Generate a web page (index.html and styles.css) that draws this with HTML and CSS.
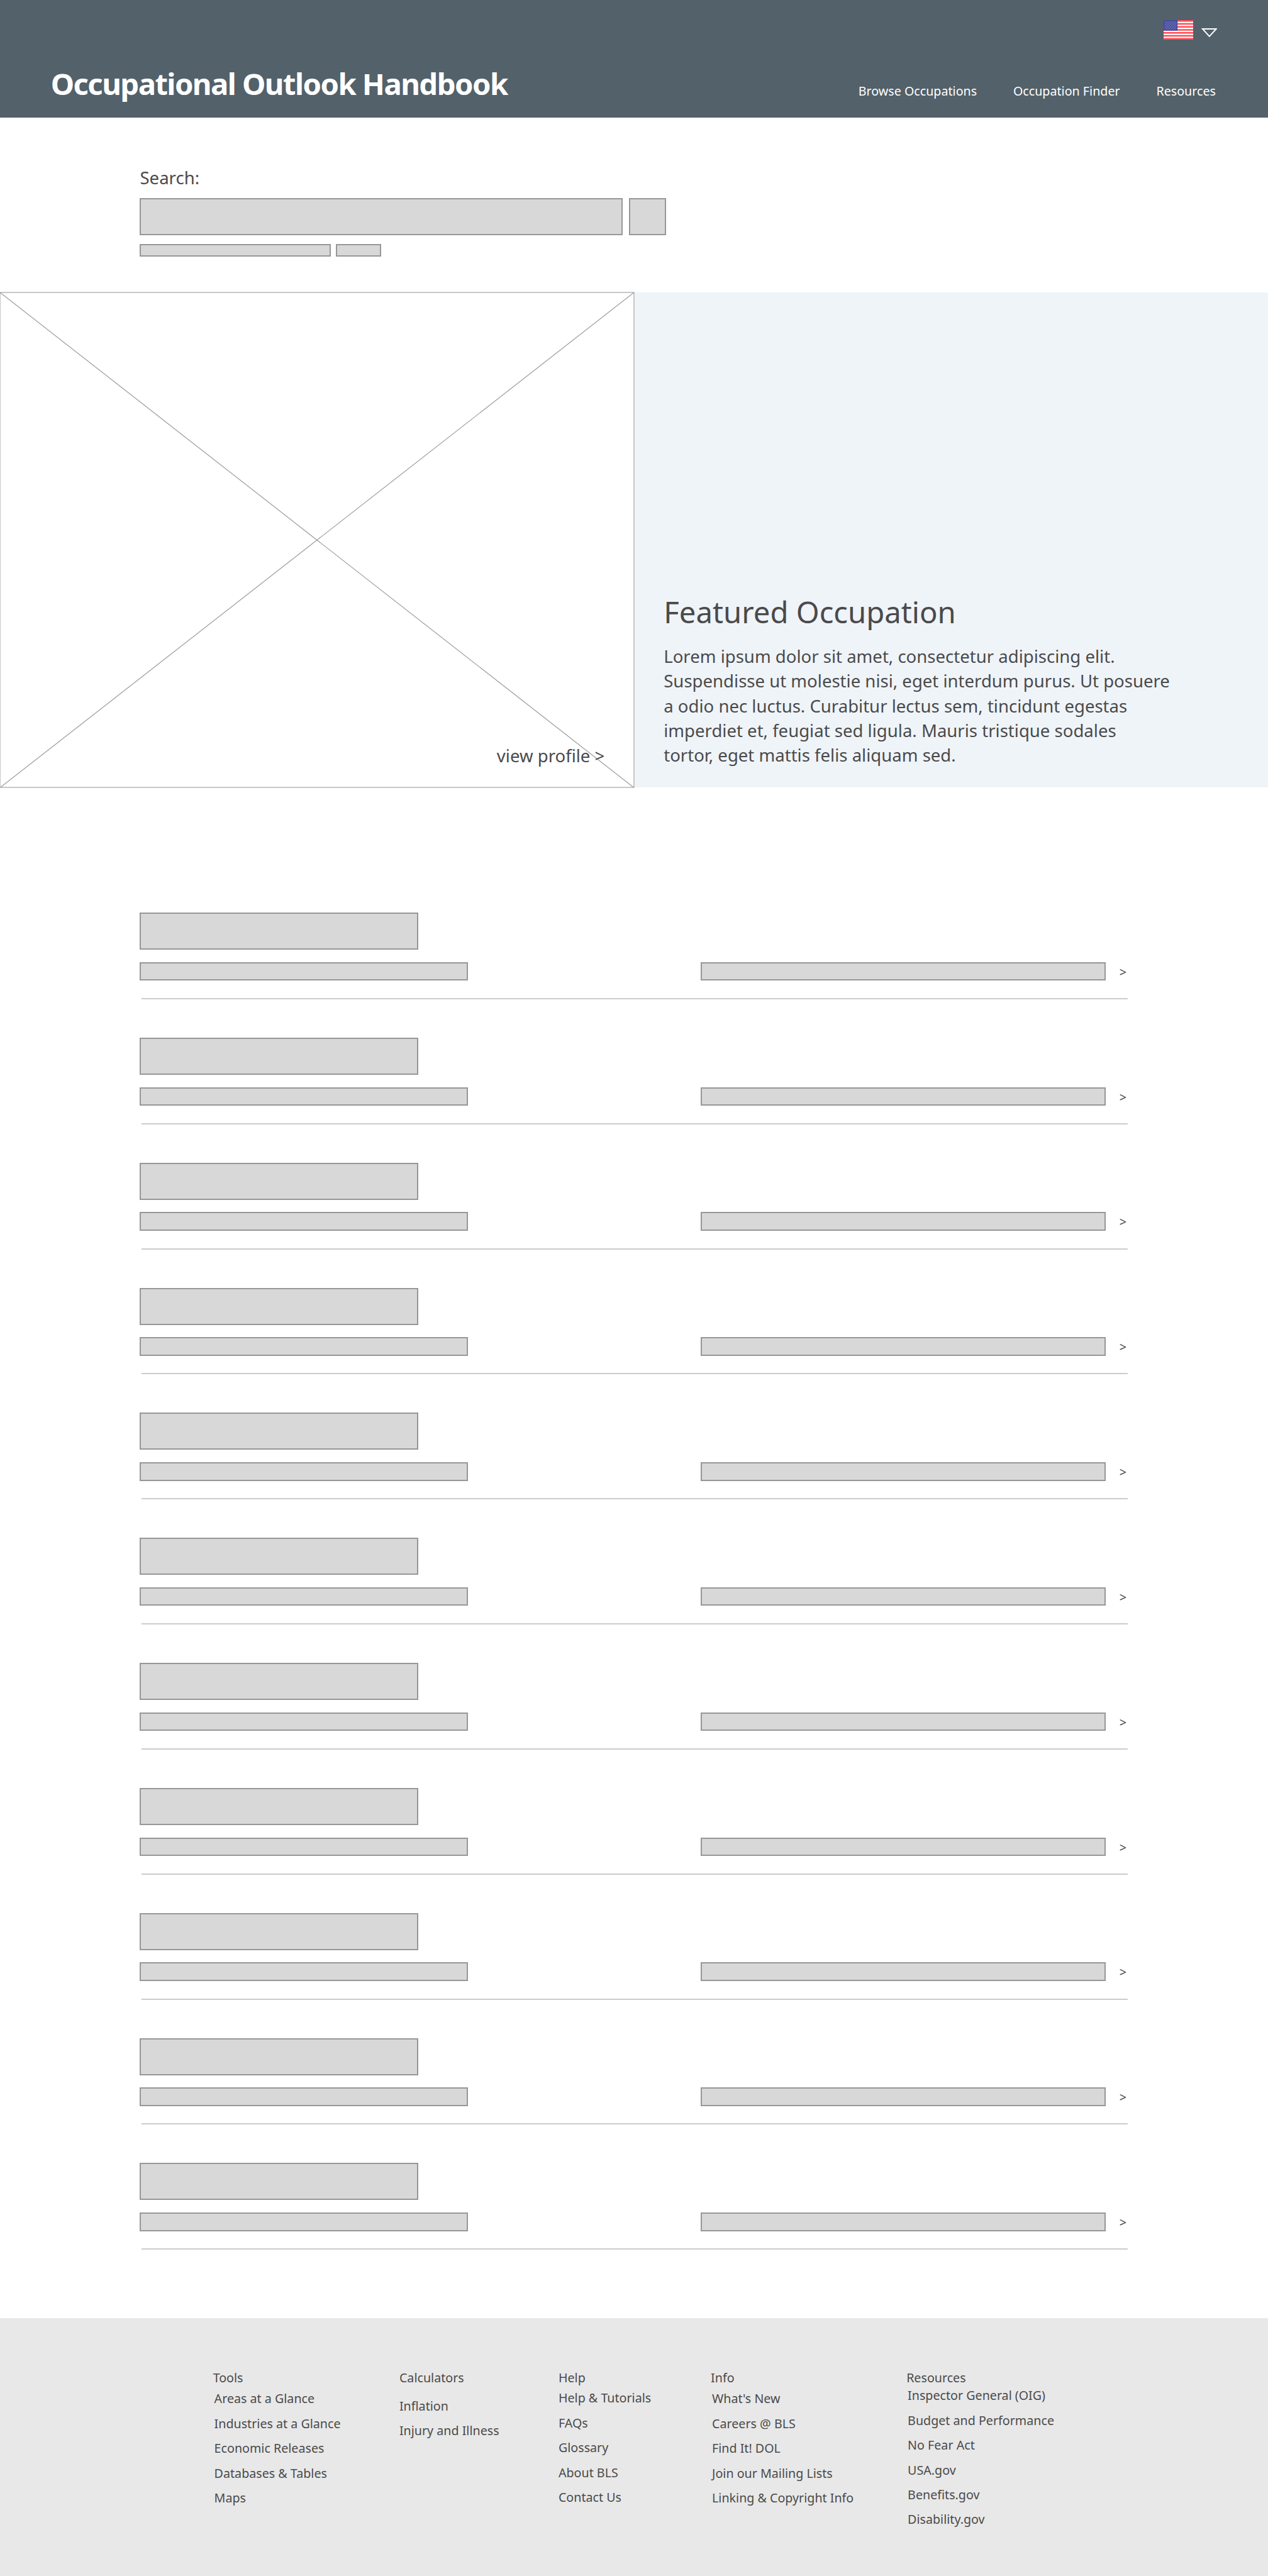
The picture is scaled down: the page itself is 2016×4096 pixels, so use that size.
FILE: index.html
```html
<!DOCTYPE html>
<html lang="en">
<head>
<meta charset="utf-8">
<title>Occupational Outlook Handbook</title>
<link rel="stylesheet" href="styles.css">
</head>
<body>
<header class="header">
  <h1 class="brand">Occupational Outlook Handbook</h1>
  <div class="header-side">
    <div class="locale">
      <svg class="flag" viewBox="0 0 48 31.5">
        <defs>
          <clipPath id="flag-clip"><rect width="48" height="31.5" rx="1.5"/></clipPath>
          <pattern id="stars" width="4" height="4" patternUnits="userSpaceOnUse">
            <circle cx="1" cy="1" r=".62" fill="#fff"/><circle cx="3" cy="3" r=".62" fill="#fff"/>
          </pattern>
        </defs>
        <g clip-path="url(#flag-clip)">
          <rect width="48" height="31.5" fill="#fff"/>
          <path stroke="#ff4b55" stroke-width="2.7" d="M0 1.2H48M0 6.05H48M0 10.9H48M0 15.75H48M0 20.6H48M0 25.45H48M0 30.3H48"/>
          <rect width="22.5" height="17" fill="#41479b"/>
          <rect x="1.5" y="1.5" width="19.5" height="14" fill="url(#stars)"/>
        </g>
      </svg>
      <svg class="caret" viewBox="0 0 26 15"><path d="M2 1H24L13 13Z" fill="none" stroke="#fff" stroke-width="2"/></svg>
    </div>
    <nav class="nav"><a>Browse Occupations</a><a>Occupation Finder</a><a>Resources</a></nav>
  </div>
</header>

<section class="search">
  <label class="search-label">Search:</label>
  <div class="search-row"><div class="block search-input"></div><div class="block search-button"></div></div>
  <div class="hint-row"><div class="block hint-long"></div><div class="block hint-short"></div></div>
</section>

<section class="featured">
  <div class="picture">
    <svg class="cross" viewBox="0 0 1024 800" preserveAspectRatio="none"><path d="M0 0L1024 800M1024 0L0 800"/></svg>
    <a class="profile">view profile &gt;</a>
  </div>
  <div class="story">
    <h2 class="story-title">Featured Occupation</h2>
    <p class="story-text">Lorem ipsum dolor sit amet, consectetur adipiscing elit.<br>Suspendisse ut molestie nisi, eget interdum purus. Ut posuere<br>a odio nec luctus. Curabitur lectus sem, tincidunt egestas<br>imperdiet et, feugiat sed ligula. Mauris tristique sodales<br>tortor, eget mattis felis aliquam sed.</p>
  </div>
</section>

<main class="list">
  <article class="item"><div class="block item-title"></div><div class="item-row"><div class="block item-left"></div><div class="block item-right"></div><span class="more">&gt;</span></div></article>
  <article class="item"><div class="block item-title"></div><div class="item-row"><div class="block item-left"></div><div class="block item-right"></div><span class="more">&gt;</span></div></article>
  <article class="item"><div class="block item-title"></div><div class="item-row"><div class="block item-left"></div><div class="block item-right"></div><span class="more">&gt;</span></div></article>
  <article class="item"><div class="block item-title"></div><div class="item-row"><div class="block item-left"></div><div class="block item-right"></div><span class="more">&gt;</span></div></article>
  <article class="item"><div class="block item-title"></div><div class="item-row"><div class="block item-left"></div><div class="block item-right"></div><span class="more">&gt;</span></div></article>
  <article class="item"><div class="block item-title"></div><div class="item-row"><div class="block item-left"></div><div class="block item-right"></div><span class="more">&gt;</span></div></article>
  <article class="item"><div class="block item-title"></div><div class="item-row"><div class="block item-left"></div><div class="block item-right"></div><span class="more">&gt;</span></div></article>
  <article class="item"><div class="block item-title"></div><div class="item-row"><div class="block item-left"></div><div class="block item-right"></div><span class="more">&gt;</span></div></article>
  <article class="item"><div class="block item-title"></div><div class="item-row"><div class="block item-left"></div><div class="block item-right"></div><span class="more">&gt;</span></div></article>
  <article class="item"><div class="block item-title"></div><div class="item-row"><div class="block item-left"></div><div class="block item-right"></div><span class="more">&gt;</span></div></article>
  <article class="item"><div class="block item-title"></div><div class="item-row"><div class="block item-left"></div><div class="block item-right"></div><span class="more">&gt;</span></div></article>
</main>

<footer class="footer">
  <div class="col col-tools"><h3>Tools</h3><ul><li>Areas at a Glance</li><li>Industries at a Glance</li><li>Economic Releases</li><li>Databases &amp; Tables</li><li>Maps</li></ul></div>
  <div class="col col-calc"><h3>Calculators</h3><ul><li>Inflation</li><li>Injury and Illness</li></ul></div>
  <div class="col col-help"><h3>Help</h3><ul><li>Help &amp; Tutorials</li><li>FAQs</li><li>Glossary</li><li>About BLS</li><li>Contact Us</li></ul></div>
  <div class="col col-info"><h3>Info</h3><ul><li>What's New</li><li>Careers @ BLS</li><li>Find It! DOL</li><li>Join our Mailing Lists</li><li>Linking &amp; Copyright Info</li></ul></div>
  <div class="col col-res"><h3>Resources</h3><ul><li>Inspector General (OIG)</li><li>Budget and Performance</li><li>No Fear Act</li><li>USA.gov</li><li>Benefits.gov</li><li>Disability.gov</li></ul></div>
</footer>
</body>
</html>
```
FILE: styles.css
```css
/* One rem is 16 design units; the design is 2048 units wide. */
html { font-size: 15.75px; }
* { box-sizing: border-box; }
body {
  margin: 0;
  background: #fff;
  color: #4a4a4a;
  font-family: "Noto Sans", sans-serif;
  overflow-x: hidden;
}
h1, h2, h3, p, ul { margin: 0; padding: 0; font-weight: 400; }
ul { list-style: none; }
svg { display: block; }

.block { background: #d8d8d8; border: 2px solid #979797; flex: none; }

.header {
  height: 11.875rem;
  padding: 0 5.125rem;
  display: flex;
  justify-content: space-between;
  background: #53616a;
  color: #fff;
}
.brand {
  padding-top: 6.4375rem;
  font-size: 3rem;
  line-height: 4rem;
  font-weight: 700;
  letter-spacing: -0.099rem;
  white-space: nowrap;
}
.header-side { display: flex; flex-direction: column; align-items: flex-end; }
.locale { display: flex; gap: .8125rem; padding-top: 2rem; height: 8.1875rem; }
.flag { width: 3rem; height: 1.96875rem; }
.caret { width: 1.625rem; height: .9375rem; margin-top: .875rem; }
.nav {
  display: flex;
  gap: 3.67rem;
  margin-right: .15rem;
  font-size: 1.25rem;
  line-height: 2rem;
  white-space: nowrap;
}

.search { height: 17.625rem; padding: 4.8125rem 0 0 14.125rem; }
.search-label { display: block; font-size: 1.75rem; line-height: 2.5rem; }
.search-row { display: flex; gap: .625rem; margin-top: .8125rem; }
.search-input { width: 48.75rem; height: 3.75rem; }
.search-button { width: 3.75rem; height: 3.75rem; }
.hint-row { display: flex; gap: .5rem; margin-top: .875rem; }
.hint-long { width: 19.25rem; height: 1.25rem; }
.hint-short { width: 4.625rem; height: 1.25rem; }

.featured { display: grid; grid-template-columns: 1fr 1fr; height: 50rem; }
/* The frame straddles the edge of its grid cell by one pixel. */
.picture {
  position: relative;
  z-index: 1;
  margin: -1px;
  display: flex;
  align-items: flex-end;
  justify-content: flex-end;
  padding: 0 2.9rem 1.88rem 0;
  border: 2px solid #c8c8c8;
}
.cross { position: absolute; inset: -1px; width: calc(100% + 2px); height: calc(100% + 2px); }
.cross path { fill: none; stroke: #979797; stroke-width: 1.15; }
.profile { position: relative; font-size: 1.75rem; line-height: 2.5rem; }
.story {
  display: flex;
  flex-direction: column;
  justify-content: flex-end;
  padding: 0 0 1.99rem 3rem;
  background: #eff4f9;
}
.story-title { font-size: 3rem; line-height: 4rem; margin-bottom: 1.25rem; }
.story-text { font-size: 1.75rem; line-height: 2.5rem; white-space: nowrap; }

.list { height: 154.5rem; padding: 12.625rem 14.125rem 0; }
.item {
  height: 12.625rem;
  display: flex;
  flex-direction: column;
  gap: 1.25rem;
}
.item::after {
  content: "";
  width: 99.5625rem;
  margin: .5rem 0 0 .16rem;
  border-top: 2px solid #ccc;
}
.item-title { width: 28.125rem; height: 3.75rem; }
.item-row { display: flex; height: 1.875rem; }
.item-left { width: 33.125rem; }
.item-right { width: 40.875rem; margin-left: 23.5rem; }
.more { margin-left: 1.375rem; font-size: 1.25rem; line-height: 2rem; }

.footer {
  height: 26.0625rem;
  padding: 5.04rem 0 0 21.5rem;
  display: flex;
  background: #e8e8e8;
  font-size: 1.25rem;
  white-space: nowrap;
}
.col h3 { font-size: 1.25rem; line-height: 2rem; }
.col li { line-height: 2.5rem; }
.col-tools { width: 18.8125rem; }
.col-calc { width: 16.0625rem; }
.col-help { width: 15.375rem; }
.col-info { width: 19.75rem; }
.col-tools ul, .col-info ul, .col-res ul { padding-left: .125rem; }
.col-tools ul, .col-info ul { margin-top: -.125rem; }
.col-calc ul { margin-top: .59rem; }
.col-help ul { margin-top: -.1875rem; }
.col-res ul { margin-top: -.4375rem; }
```
